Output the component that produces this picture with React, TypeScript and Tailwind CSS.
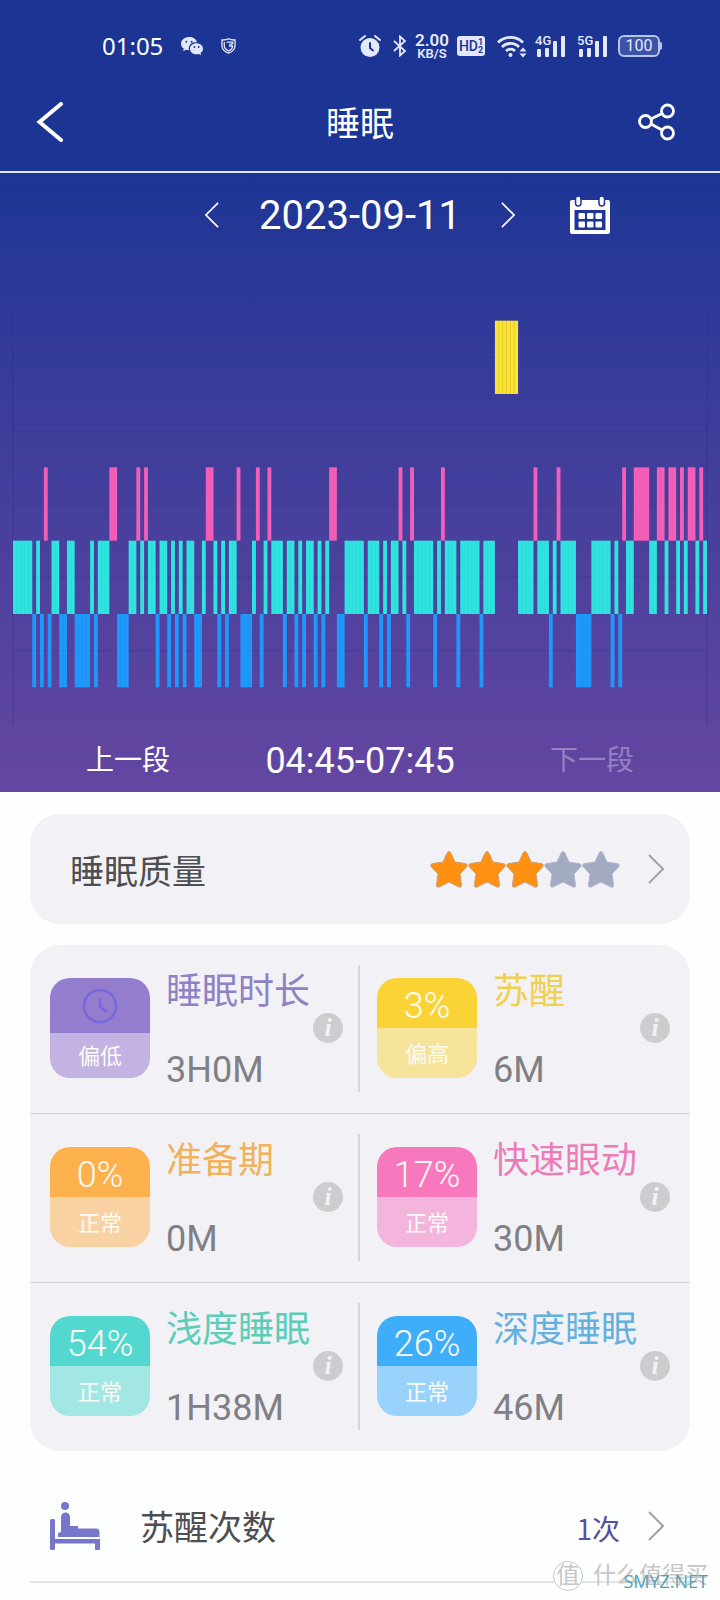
import clsx from "clsx";

type Stage = "W" | "R" | "L" | "D";

// Sleep stages minute by minute, run-length encoded.
// W = awake, R = REM, L = light, D = deep
const NIGHT =
  "L5 D1 L1 D1 R1 D1 L2 D2 L2 D4 L1 D1 L3 R2 D3 L2 R1 L1 R1 L2 D1 L2 D1 L1 D1 L1 D1 L2 D2 L1 " +
  "R2 L1 D1 L1 D1 L2 R1 D3 L1 R1 D1 L1 R1 L3 D1 L2 D1 L1 D1 L2 D1 L1 D1 L1 R2 D2 L5 D1 L3 D1 " +
  "L1 D1 L2 R1 L1 D1 R1 L5 D1 L1 R1 L3 D1 L5 D1 L3 W6 L4 R1 L3 D1 L1 R1 L4 D4 L5 D1 L1 D1 R1 " +
  "L2 R4 L2 R2 L1 R2 L1 R1 L1 R2 L1 R1 L1";

const TOTAL_MINUTES = 180;
const ROW = 440 / 6;

const stageRow: Record<Stage, number> = { W: 0, R: 2, L: 3, D: 4 };
const stageFill: Record<Stage, string> = {
  W: "#fde334",
  R: "#f35fb8",
  L: "#2fe3e0",
  D: "#1e98fb",
};

function buildRuns() {
  let start = 0;
  return NIGHT.split(" ").map((token) => {
    const run = { stage: token[0] as Stage, start, length: Number(token.slice(1)) };
    start += run.length;
    return run;
  });
}

const runs = buildRuns();

const metrics = [
  { name: "睡眠时长", value: "3H0M", percent: null, level: "偏低", title: "text-[#8f82c4]", top: "bg-[#957dcd]", bottom: "bg-[#c3b3e3]" },
  { name: "苏醒", value: "6M", percent: "3%", level: "偏高", title: "text-[#efd04f]", top: "bg-[#fad336]", bottom: "bg-[#f5e499]" },
  { name: "准备期", value: "0M", percent: "0%", level: "正常", title: "text-[#f0b25a]", top: "bg-[#fdb14d]", bottom: "bg-[#f8d2a3]" },
  { name: "快速眼动", value: "30M", percent: "17%", level: "正常", title: "text-[#ec7cb8]", top: "bg-[#f778bc]", bottom: "bg-[#f4b5dc]" },
  { name: "浅度睡眠", value: "1H38M", percent: "54%", level: "正常", title: "text-[#5bcdb8]", top: "bg-[#52d8cf]", bottom: "bg-[#a3e7e4]" },
  { name: "深度睡眠", value: "46M", percent: "26%", level: "正常", title: "text-[#64b1e0]", top: "bg-[#3eaefb]", bottom: "bg-[#99d2fb]" },
];

function Chevron({ left, className }: { left?: boolean; className?: string }) {
  return (
    <svg viewBox="0 0 16 30" className={className} fill="none" stroke="currentColor" strokeWidth="2">
      <path d={left ? "M15 1 1 15l14 14" : "M1 1l14 14L1 29"} />
    </svg>
  );
}

function Signal({ label }: { label: string }) {
  return (
    <svg viewBox="0 0 31 24" className="h-6 w-[31px]" fill="currentColor">
      <text x="0" y="11" fontSize="13" fontWeight="500" fontFamily="Roboto, sans-serif">{label}</text>
      <rect x="2" y="15" width="4" height="8" rx="1" />
      <rect x="10" y="14" width="4" height="9" rx="1" />
      <rect x="18" y="7" width="4" height="16" rx="1" />
      <rect x="26" y="2" width="4" height="21" rx="1" />
    </svg>
  );
}

function StatusBar() {
  return (
    <div className="flex h-[72px] items-center pt-5 pr-[58px] pl-[102px] text-[#e3e9fb]">
      <span className="font-['Noto_Sans'] text-2xl text-white">01:05</span>

      {/* chat bubbles */}
      <svg viewBox="0 0 22 19" className="ml-[18px] h-[19px] w-[22px]" fill="currentColor">
        <path d="M8 0C3.500 0 0 3 0 6.700c0 2.100 1.100 3.900 2.900 5.100l-.8 2.400 2.900-1.400c1 .3 1.900.4 3 .4-1.300-5 3-8.400 8-8.200C15.200 2 12 0 8 0Z" />
        <path d="M22 11.700c0-3.100-3-5.500-6.500-5.500S9 8.600 9 11.700s2.900 5.600 6.500 5.600c.8 0 1.600-.1 2.400-.4l2.200 1.300-.6-2.100c1.500-1 2.500-2.600 2.500-4.400Z" />
        <g fill="#1c3595">
          <circle cx="5.300" cy="4.700" r="1" />
          <circle cx="10.600" cy="4.700" r="1" />
          <circle cx="13.400" cy="10" r=".9" />
          <circle cx="17.700" cy="10" r=".9" />
        </g>
      </svg>

      {/* shield */}
      <svg viewBox="0 0 15 16" className="ml-[18px] h-4 w-[15px]" fill="none" stroke="currentColor" strokeWidth="1.300">
        <path d="M7.500.8C5.500 1.900 3 2.100 1 2v6c0 3.500 3 5.800 6.500 7.200C11 13.800 14 11.500 14 8V2c-2 .1-4.500-.1-6.500-1.200Z" />
        <path d="M3.300 4v4c0 2 1.700 3.600 4.200 4.800C10 11.800 11.600 10.300 11.600 8H8M5.600 4.200h6v1.500c-1.500 0-2 .8-3.300.8" />
      </svg>

      <div className="ml-auto flex items-center">
        {/* alarm */}
        <svg viewBox="0 0 22 24" className="h-6 w-[22px]" fill="currentColor">
          <circle cx="11" cy="13.500" r="9.500" />
          <path d="M1 6 6 2M21 6l-5-4" stroke="currentColor" strokeWidth="2" strokeLinecap="round" />
          <path d="M11 9v5l3 2.500" fill="none" stroke="#1c3595" strokeWidth="2" strokeLinecap="round" />
        </svg>

        {/* bluetooth */}
        <svg viewBox="0 0 14 22" className="ml-3 h-[22px] w-3.5" fill="none" stroke="currentColor" strokeWidth="1.800">
          <path d="m1 6 11 10-5 4.500v-19L12 6 1 16" />
        </svg>

        <div className="ml-2 text-center font-[Roboto] font-semibold">
          <div className="text-[17px] leading-[14px]">2.00</div>
          <div className="text-[13px] leading-[13px]">KB/S</div>
        </div>

        {/* HD badge */}
        <div className="ml-2 flex h-5 w-7 items-center justify-center rounded-[3px] bg-[#e3e9fb] font-[Roboto] text-[#1c3595]">
          <span className="text-sm font-medium">HD</span>
          <span className="text-[9px] leading-[8px] font-bold">
            1<br />2
          </span>
        </div>

        {/* wifi */}
        <svg viewBox="0 0 30 24" className="ml-3 h-6 w-[30px]" fill="none" stroke="currentColor" strokeWidth="2.800">
          <path d="M1 8.500a18 18 0 0 1 25 0M5 13a12 12 0 0 1 17 0M9 17a6.500 6.500 0 0 1 9 0" />
          <circle cx="13.500" cy="21" r="2" fill="currentColor" stroke="none" />
          <path d="m26 13.500 3.500 4h-7zM26 23.500l3.500-4h-7z" fill="currentColor" stroke="none" />
        </svg>

        <div className="ml-2 flex gap-[11px]">
          <Signal label="4G" />
          <Signal label="5G" />
        </div>

        {/* battery */}
        <div className="ml-2.5 flex items-center">
          <div className="flex h-[22px] w-[42px] items-center justify-center rounded-md border-2 border-[#b9c4ea] bg-[#3d53aa] font-[Roboto] text-base">
            100
          </div>
          <div className="h-2 w-0.5 rounded-r bg-[#b9c4ea]" />
        </div>
      </div>
    </div>
  );
}

function TitleBar() {
  return (
    <header className="flex h-[101px] items-center justify-between border-b-2 border-[#e4e8f8] px-9">
      <button type="button" aria-label="返回" className="w-12">
        <svg viewBox="0 0 28 40" className="h-10 w-7" fill="none" stroke="currentColor" strokeWidth="4" strokeLinecap="round">
          <path d="M25 2 3.500 20 25 38" />
        </svg>
      </button>
      <h1 className="pt-1.5 text-[34px]">睡眠</h1>
      <button type="button" aria-label="分享" className="w-12 pr-2">
        <svg viewBox="0 0 38 38" className="ml-auto size-[38px]" fill="none" stroke="currentColor" strokeWidth="2.800">
          <circle cx="7.500" cy="18.500" r="6" />
          <circle cx="29.500" cy="8" r="6" />
          <circle cx="29.500" cy="30" r="6" />
          <path d="m13 16 11-5.500M13 21l11 6" />
        </svg>
      </button>
    </header>
  );
}

function DateBar() {
  return (
    <div className="grid h-[84px] grid-cols-[1fr_auto_1fr] items-center">
      <div />
      <div className="flex w-[312px] items-center justify-between">
        <button type="button" aria-label="前一天">
          <Chevron left className="h-[26px] w-4" />
        </button>
        <time className="pt-0.5 text-[40px]">2023-09-11</time>
        <button type="button" aria-label="后一天">
          <Chevron className="h-[26px] w-4" />
        </button>
      </div>
      <button type="button" aria-label="日历" className="ml-[54px] w-10">
        <svg viewBox="0 0 40 38" className="h-[38px] w-10">
          <path d="M2 4h36a2 2 0 0 1 2 2v30a2 2 0 0 1-2 2H2a2 2 0 0 1-2-2V6a2 2 0 0 1 2-2Z" fill="#fff" />
          <path d="M4.500 14h31v20h-31z" fill="#1e3697" />
          <g fill="#fff" stroke="#1e3697" strokeWidth="1.500">
            <rect x="5.500" y="0" width="5.500" height="10" rx="2.700" />
            <rect x="29" y="0" width="5.500" height="10" rx="2.700" />
          </g>
          <g fill="#fff">
            <rect x="8.500" y="17" width="6.500" height="6" rx="1" />
            <rect x="17" y="17" width="6.500" height="6" rx="1" />
            <rect x="25.500" y="17" width="6.500" height="6" rx="1" />
            <rect x="8.500" y="25.500" width="6.500" height="6" rx="1" />
            <rect x="17" y="25.500" width="6.500" height="6" rx="1" />
            <rect x="25.500" y="25.500" width="6.500" height="6" rx="1" />
          </g>
        </svg>
      </button>
    </div>
  );
}

function SleepChart() {
  return (
    <div className="mt-[27px] px-[13px]">
      <svg viewBox="0 0 180 440" preserveAspectRatio="none" className="h-[440px] w-full overflow-visible">
        <g stroke="#2a2f86" strokeOpacity=".4" strokeWidth="1">
          {[1, 2, 3, 4, 5].map((i) => (
            <line key={i} x1="0" x2={TOTAL_MINUTES} y1={i * ROW} y2={i * ROW} vectorEffect="non-scaling-stroke" />
          ))}
          <line x1="0" x2="0" y1="0" y2="440" vectorEffect="non-scaling-stroke" />
          <line x1={TOTAL_MINUTES} x2={TOTAL_MINUTES} y1="0" y2="440" vectorEffect="non-scaling-stroke" />
        </g>
        {runs.map((run) => {
          const y = (stageRow[run.stage] + 0.5) * ROW;
          return (
            <g key={run.start}>
              <rect x={run.start} y={y} width={run.length} height={ROW} fill={stageFill[run.stage]} />
              {/* hairline between neighbouring minutes */}
              {Array.from({ length: run.length - 1 }, (_, i) => (
                <line
                  key={i}
                  x1={run.start + i + 1}
                  x2={run.start + i + 1}
                  y1={y}
                  y2={y + ROW}
                  stroke="#000"
                  strokeOpacity={run.stage === "W" ? ".1" : ".04"}
                  vectorEffect="non-scaling-stroke"
                />
              ))}
            </g>
          );
        })}
      </svg>
    </div>
  );
}

function SegmentBar() {
  return (
    <div className="grid h-[68px] grid-cols-3 place-items-center px-3 pt-1.5">
      <button type="button" className="text-[28px]">上一段</button>
      <span className="text-4xl">04:45-07:45</span>
      <button type="button" disabled className="text-[28px] text-[#9580c2]">下一段</button>
    </div>
  );
}

function Star({ filled }: { filled: boolean }) {
  return (
    <svg viewBox="0 0 38 38" className={clsx("size-[38px]", filled ? "text-[#ff9012]" : "text-[#a3abc3]")}>
      <path
        d="M19 1.500c1 0 1.500.8 2 1.800l4 8.700 10 1.500c2.500.5 3 2 1.300 3.700L30 24l1.500 10.500c.2 2.500-1 3.300-3 2.300L19 32l-9.500 4.800c-2 1-3.200.2-3-2.300L8 24l-6.300-6.800C0 15.500.5 14 3 13.500L13 12l4-8.700c.5-1 1-1.800 2-1.800Z"
        fill="currentColor"
        stroke={filled ? "#c9a078" : "#b3b8c9"}
        strokeWidth="1"
      />
    </svg>
  );
}

function QualityCard() {
  return (
    <button type="button" className="flex h-[110px] w-full items-center rounded-[30px] bg-[#f2f1f6] pr-[26px] pl-10 text-[#4d4d52]">
      <span className="pt-1.5 text-[34px]">睡眠质量</span>
      <span className="ml-auto flex">
        {[1, 2, 3, 4, 5].map((n) => (
          <Star key={n} filled={n <= 3} />
        ))}
      </span>
      <Chevron className="ml-7 h-[30px] w-4 text-[#a3a3a8]" />
    </button>
  );
}

function Metric({ item, divided, last }: { item: (typeof metrics)[number]; divided: boolean; last: boolean }) {
  return (
    <div className={clsx("relative flex pt-[33px] pb-[35px]", divided ? "pl-5" : "pl-[17px]", !last && "border-b border-[#d6d5dc]")}>
      <div className="flex size-[100px] shrink-0 flex-col overflow-hidden rounded-[20px] text-[#fdfbf6]">
        <div className={clsx("flex items-center justify-center text-4xl", item.percent ? "h-[50px] pt-1.5 font-light" : "h-[55px]", item.top)}>
          {item.percent ?? (
            <svg viewBox="0 0 36 36" className="size-9" fill="none" stroke="#7468dc" strokeWidth="2.500">
              <circle cx="18" cy="18" r="16" />
              <path d="M18 10v9l7 5" />
            </svg>
          )}
        </div>
        <div className={clsx("flex flex-1 items-center justify-center pt-0.5 text-[22px]", item.bottom)}>{item.level}</div>
      </div>

      <div className="-mt-2 -mb-3 ml-4 flex flex-1 flex-col justify-between">
        <h2 className={clsx("text-4xl leading-[44px] whitespace-nowrap", item.title)}>{item.name}</h2>
        <p className="text-4xl leading-[40px] text-[#808084]">{item.value}</p>
      </div>

      <button
        type="button"
        aria-label={`${item.name}说明`}
        className={clsx(
          "absolute top-[68px] size-[30px] rounded-full bg-[#cdcccf] font-['Liberation_Serif'] text-[26px] leading-[28px] font-bold text-[#f2f1f6] italic",
          divided ? "right-[17px]" : "right-5",
        )}
      >
        i
      </button>
      {divided && <div className="absolute top-5 right-0 h-[127px] w-0.5 bg-[#d6d5dc]" />}
    </div>
  );
}

function MetricsCard() {
  return (
    <section className="mt-[21px] grid grid-cols-2 rounded-[30px] bg-[#f2f1f6]">
      {metrics.map((item, i) => (
        <Metric key={item.name} item={item} divided={i % 2 === 0} last={i >= metrics.length - 2} />
      ))}
    </section>
  );
}

function WakeCountRow() {
  return (
    <button type="button" className="mt-5 flex h-28 w-full items-center border-b-2 border-[#e4e5e8] pr-[26px] pl-5 text-[#4d4d52]">
      <svg viewBox="0 0 50 48" className="h-12 w-[50px]" fill="#7676cb">
        <rect x="0" y="17" width="5" height="31" rx="1.500" />
        <rect x="0" y="37" width="50" height="4.500" />
        <rect x="45" y="37" width="5" height="11" rx="1" />
        <circle cx="15" cy="4" r="4" />
        <path d="M11 15a4.500 4.500 0 0 1 9 0v9h8v2.500h18a3.500 3.500 0 0 1 3.500 3.500v5H8v-4l3-1Z" />
      </svg>
      <span className="ml-10 pt-1 text-[34px]">苏醒次数</span>
      <span className="ml-auto pt-1 font-['Noto_Sans_CJK_SC'] text-[28px] text-[#55509a]">1次</span>
      <Chevron className="ml-7 h-[30px] w-4 text-[#a3a3a8]" />
    </button>
  );
}

function Watermark() {
  return (
    <div className="pointer-events-none absolute right-3 bottom-[7px] flex items-center gap-2.5 text-[#c6c6c6]">
      <span className="flex size-[30px] items-center justify-center rounded-full border border-[#c9c9c9] bg-[#fdfefe] text-[23px]">值</span>
      <span className="text-[23px] leading-[34px]">什么值得买</span>
      <span className="absolute right-0 bottom-0 font-['Open_Sans'] text-lg leading-[24px] text-[#4fa3b8]">SMYZ.NET</span>
    </div>
  );
}

export default function App() {
  return (
    <div className="relative min-h-screen bg-[#fdfefe] font-[Roboto,'Noto_Sans_CJK_SC',sans-serif] font-normal">
      <div className="bg-[#1c3595] text-white">
        <StatusBar />
        <TitleBar />
        <div className="bg-linear-to-b from-[#1c3595] to-[#6446a1]">
          <DateBar />
          <SleepChart />
          <SegmentBar />
        </div>
      </div>

      <main className="px-[30px] pt-[22px] pb-[17px]">
        <QualityCard />
        <MetricsCard />
        <WakeCountRow />
      </main>
      <Watermark />
    </div>
  );
}
